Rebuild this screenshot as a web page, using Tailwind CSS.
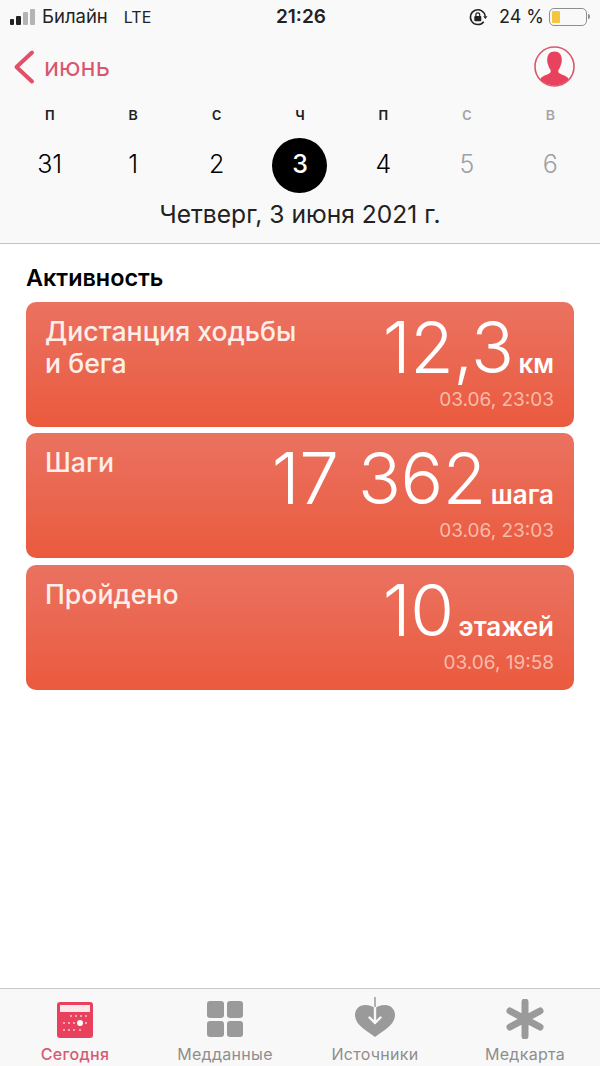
<!DOCTYPE html>
<html lang="ru">
<head>
    <meta charset="UTF-8">
    <meta name="viewport" content="width=device-width, initial-scale=1.0">
    <title>Здоровье</title>
    <script src="https://cdn.jsdelivr.net/npm/@tailwindcss/browser@4"></script>
</head>
<body class="bg-white font-['Inter','Liberation_Sans',sans-serif]">
<div class="w-[600px] h-[1066px] flex flex-col overflow-hidden text-black">

    <!-- Header -->
    <div class="h-[244px] shrink-0 bg-[#f9f9f9] border-b border-[#c4c4c6] flex flex-col">
        <!-- Status bar -->
        <div class="h-[33px] pl-[10px] pr-[10px] flex items-center justify-between relative text-[#222]">
            <div class="flex items-center">
                <div class="flex items-end gap-[2px] h-[16px]">
                    <span class="w-[4px] h-[6px] rounded-[1px] bg-[#222]"></span>
                    <span class="w-[5px] h-[9px] rounded-[1px] bg-[#222]"></span>
                    <span class="w-[5px] h-[13px] rounded-[1px] bg-[#b4b4b4]"></span>
                    <span class="w-[5px] h-[16px] rounded-[1px] bg-[#b4b4b4]"></span>
                </div>
                <span class="ml-[7px] text-[18.500px] leading-none">Билайн</span>
                <span class="ml-[16px] text-[16px] leading-none">LTE</span>
            </div>
            <span class="absolute left-[276px] text-[19px] font-semibold leading-none">21:26</span>
            <div class="flex items-center">
                <svg class="w-[20px] h-[20px]" viewBox="0 0 20 20" fill="none">
                    <path d="M17.200 9.500a7.400 7.400 0 1 0-1.500 5.200" stroke="#222" stroke-width="1.500"/>
                    <path d="M15.200 9.200h4.300l-2.150 2.800z" fill="#222"/>
                    <rect x="6.300" y="9" width="7" height="5.200" rx="1" fill="#222"/>
                    <path d="M7.900 9.300V7.800a1.900 1.900 0 0 1 3.800 0v1.500" stroke="#222" stroke-width="1.200"/>
                </svg>
                <span class="ml-[11px] text-[18px] leading-none">24 %</span>
                <div class="ml-[5px] w-[38px] h-[18px] border border-[#8e8e8e] rounded-[5px] py-[2px] px-[2px]">
                    <div class="w-[8px] h-full bg-[#f4c63d] rounded-[1px]"></div>
                </div>
                <span class="ml-[1px] w-[2px] h-[5px] bg-[#8e8e8e] rounded-r-[2px]"></span>
            </div>
        </div>

        <!-- Month row -->
        <div class="h-[67px] pl-[13px] pr-[25px] flex items-center justify-between">
            <div class="flex items-center">
                <svg class="w-[22px] h-[36px]" viewBox="0 0 22 36" fill="none">
                    <path d="M19 3.500 3.500 18 19 32.500" stroke="#e34f68" stroke-width="4" stroke-linecap="round" stroke-linejoin="round"/>
                </svg>
                <span class="ml-[9px] text-[25.500px] leading-none text-[#d9566e]">июнь</span>
            </div>
            <svg class="w-[41px] h-[41px]" viewBox="0 0 41 41">
                <defs><clipPath id="avatar"><circle cx="20.500" cy="20.500" r="19"/></clipPath></defs>
                <circle cx="20.500" cy="20.500" r="19.500" fill="#fafafa" stroke="#d9576c" stroke-width="1.600"/>
                <path clip-path="url(#avatar)" d="M20.500 5.500c4.800 0 7.300 3.400 7.300 8.600 0 2.100-.4 3.400-.9 4.600-.6 1.900-1.300 3.800-2.300 5-.5.900-.3 2.700.4 3.400 2 1.600 7.800 2.800 9.300 5.500V41H6.700v-8.400c1.500-2.700 7.300-3.900 9.300-5.500.7-.7.900-2.500.4-3.400-1-1.200-1.700-3.100-2.300-5-.5-1.200-.9-2.500-.9-4.600 0-5.200 2.500-8.600 7.300-8.600z" fill="#e9425f"/>
            </svg>
        </div>

        <!-- Week -->
        <div class="px-[8px] grid grid-cols-7 text-center text-[17px] leading-[28px] font-medium">
            <span class="text-[#222]">п</span>
            <span class="text-[#222]">в</span>
            <span class="text-[#222]">с</span>
            <span class="text-[#222]">ч</span>
            <span class="text-[#222]">п</span>
            <span class="text-[#a5a5a5]">с</span>
            <span class="text-[#a5a5a5]">в</span>
        </div>
        <div class="px-[8px] mt-[9px] grid grid-cols-7 justify-items-center items-center h-[56px] text-[25px] font-light">
            <span>31</span>
            <span>1</span>
            <span>2</span>
            <span class="w-[55px] h-[55px] rounded-full bg-black text-white font-medium flex items-center justify-center">3</span>
            <span>4</span>
            <span class="text-[#a0a0a0]">5</span>
            <span class="text-[#a0a0a0]">6</span>
        </div>
        <div class="mt-[6px] text-center text-[24.600px] leading-[30px] text-[#222]">Четверг, 3 июня 2021 г.</div>
    </div>

    <!-- Content -->
    <div class="flex-1 px-[26px]">
        <h2 class="mt-[20px] text-[23.400px] leading-[28px] font-semibold">Активность</h2>
        <div class="mt-[9.800px] flex flex-col gap-[6.500px]">
            <div class="h-[125px] rounded-[10px] bg-gradient-to-b from-[#ea7260] to-[#ea5a3e] pl-[19px] pr-[20px] pt-[13px] flex justify-between text-white">
                <div class="text-[26.700px] leading-[32px] font-medium text-[#fdeee9]">Дистанция ходьбы<br>и бега</div>
                <div class="flex flex-col items-end">
                    <div class="flex items-baseline leading-none -mt-[2px]">
                        <span class="text-[71px] leading-[68px] font-light tracking-[-0.5px]">12,3</span>
                        <span class="ml-[5px] text-[26px] font-semibold">км</span>
                    </div>
                    <span class="mt-[7px] text-[19px] leading-[24px] text-[#f9bba9]">03.06, 23:03</span>
                </div>
            </div>
            <div class="h-[125px] rounded-[10px] bg-gradient-to-b from-[#ea7260] to-[#ea5a3e] pl-[19px] pr-[20px] pt-[13px] flex justify-between text-white">
                <div class="text-[26.700px] leading-[32px] font-medium text-[#fdeee9]">Шаги</div>
                <div class="flex flex-col items-end">
                    <div class="flex items-baseline leading-none -mt-[2px]">
                        <span class="text-[71px] leading-[68px] font-light tracking-[-0.5px]">17 362</span>
                        <span class="ml-[5px] text-[26px] font-semibold">шага</span>
                    </div>
                    <span class="mt-[7px] text-[19px] leading-[24px] text-[#f9bba9]">03.06, 23:03</span>
                </div>
            </div>
            <div class="h-[125px] rounded-[10px] bg-gradient-to-b from-[#ea7260] to-[#ea5a3e] pl-[19px] pr-[20px] pt-[13px] flex justify-between text-white">
                <div class="text-[26.700px] leading-[32px] font-medium text-[#fdeee9]">Пройдено</div>
                <div class="flex flex-col items-end">
                    <div class="flex items-baseline leading-none -mt-[2px]">
                        <span class="text-[71px] leading-[68px] font-light tracking-[-0.5px]">10</span>
                        <span class="ml-[5px] text-[26px] font-semibold">этажей</span>
                    </div>
                    <span class="mt-[7px] text-[19px] leading-[24px] text-[#f9bba9]">03.06, 19:58</span>
                </div>
            </div>
        </div>
    </div>

    <!-- Tab bar -->
    <div class="h-[78px] shrink-0 bg-[#f8f8f8] border-t border-[#c9c9cb] grid grid-cols-4 text-center text-[16px] leading-[20px] text-[#8e8e8e] tracking-[0.3px]">
        <div class="flex flex-col items-center pt-[13px]">
            <svg class="w-[36px] h-[36px]" viewBox="0 0 36 36">
                <rect width="36" height="36" rx="3" fill="#e9405e"/>
                <rect x="3" y="3" width="30" height="7" fill="#fbe9ec"/>
                <g fill="#f9c8d1">
                    <circle cx="14" cy="14" r="1"/><circle cx="19" cy="14" r="1"/><circle cx="24" cy="14" r="1"/><circle cx="29" cy="14" r="1"/>
                    <circle cx="7" cy="21" r="1"/><circle cx="12" cy="21" r="1"/><circle cx="17" cy="21" r="1"/><circle cx="29" cy="21" r="1"/>
                    <circle cx="7" cy="28" r="1"/><circle cx="12" cy="28" r="1"/><circle cx="17" cy="28" r="1"/><circle cx="23" cy="28" r="1"/>
                </g>
                <circle cx="23" cy="21" r="3" fill="#fff"/>
            </svg>
            <span class="mt-[6px] text-[#d65a72] font-medium">Сегодня</span>
        </div>
        <div class="flex flex-col items-center pt-[12px]">
            <div class="w-[36px] h-[36px] grid grid-cols-2 gap-[3px]">
                <span class="rounded-[3px] bg-[#9a9a9a]"></span>
                <span class="rounded-[3px] bg-[#9a9a9a]"></span>
                <span class="rounded-[3px] bg-[#9a9a9a]"></span>
                <span class="rounded-[3px] bg-[#9a9a9a]"></span>
            </div>
            <span class="mt-[7px]">Медданные</span>
        </div>
        <div class="flex flex-col items-center pt-[8px]">
            <svg class="w-[42px] h-[41px]" viewBox="0 0 42 41" fill="none">
                <path d="M21 40C13 34 1 28 1 18 1 12 5.500 8 11 8c4.500 0 8 1.500 10 3.500C23 9.500 26.500 8 31 8c5.500 0 10 4 10 10 0 10-12 16-20 22z" fill="#9a9a9a"/>
                <path d="M21 0v11" stroke="#9a9a9a" stroke-width="1.500"/>
                <path d="M21 11v15M15.500 20.500l5.500 5.500 5.500-5.500" stroke="#f8f8f8" stroke-width="2.400" stroke-linecap="round" stroke-linejoin="round"/>
            </svg>
            <span class="mt-[6px]">Источники</span>
        </div>
        <div class="flex flex-col items-center pt-[10px]">
            <svg class="w-[40px] h-[40px]" viewBox="0 0 40 40" fill="none">
                <path d="M20 3v34M5 12l30 16M35 12 5 28" stroke="#9a9a9a" stroke-width="7" stroke-linecap="round"/>
            </svg>
            <span class="mt-[5px]">Медкарта</span>
        </div>
    </div>
</div>
</body>
</html>
